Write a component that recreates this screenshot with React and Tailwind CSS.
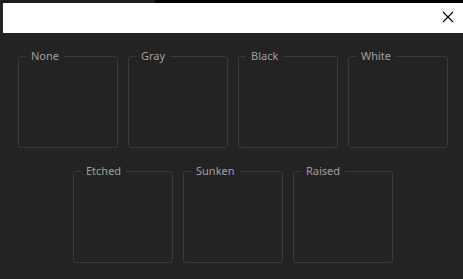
import React from 'react';

const rowOne = ['None', 'Gray', 'Black', 'White'];
const rowTwo = ['Etched', 'Sunken', 'Raised'];

function Frame({ title }) {
  return (
    <div className="relative w-[100px] h-[92px] rounded-[3px] border border-[#3a3a3a]">
      {/* caption sits on the top border */}
      <span className="absolute left-[7px] top-[-8px] px-[5px] bg-[#232323] text-[11px] leading-[14px] text-[#a0a0a0]">
        {title}
      </span>
    </div>
  );
}

export default function App() {
  return (
    <div className="w-[463px] h-[279px] overflow-hidden bg-[#232323] font-['Noto_Sans',sans-serif]">
      {/* top strip */}
      <div className="flex h-[3px]">
        <div className="w-[155px] bg-[#1e1e1e]" />
        <div className="flex-1 bg-black" />
      </div>

      <div className="pl-[3px]">
        {/* title bar */}
        <div className="h-[30px] bg-white flex items-center justify-end pr-[9px]">
          <svg width="12" height="12" viewBox="0 0 12 12" className="mb-[2px]">
            <path d="M1 1 L11 11 M11 1 L1 11" stroke="#000" strokeWidth="1.1" />
          </svg>
        </div>

        {/* frames */}
        <div className="flex flex-col items-center gap-[23px] pt-[23px]">
          <div className="flex gap-[10px]">
            {rowOne.map((t) => (
              <Frame key={t} title={t} />
            ))}
          </div>
          <div className="flex gap-[10px]">
            {rowTwo.map((t) => (
              <Frame key={t} title={t} />
            ))}
          </div>
        </div>
      </div>
    </div>
  );
}
